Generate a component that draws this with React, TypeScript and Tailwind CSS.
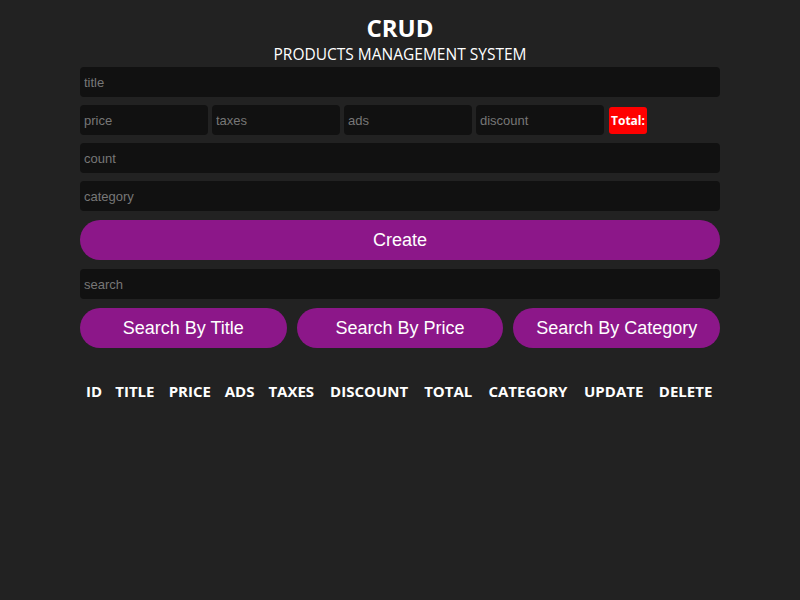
import React from "react";

const inputCls =
  "h-[30px] w-full rounded bg-[#111] px-1 text-[13px] text-white outline-none placeholder:text-[#777] font-['Liberation_Sans',Arial,sans-serif]";

const btnCls =
  "h-10 w-full rounded-full bg-[#8c1789] text-lg text-white font-['Liberation_Sans',Arial,sans-serif]";

const cols = ["id", "title", "price", "ads", "taxes", "discount", "total", "category", "update", "delete"];

export default function App() {
  return (
    <div className="min-h-screen bg-[#222] font-['Open_Sans',sans-serif] text-white">
      <div className="mx-auto w-[640px]">
        <div className="pt-[12px] text-center uppercase">
          <h2 className="text-2xl font-bold leading-8">CRUD</h2>
          <p className="mt-[2px] text-[15.5px] leading-[17px]">Products Management System</p>
        </div>
        <div className="flex flex-col">
          <input className={`${inputCls} my-1`} placeholder="title" />
          <div className="my-1 flex items-center gap-1">
            <input className={`${inputCls} !w-[128px]`} placeholder="price" />
            <input className={`${inputCls} !w-[128px]`} placeholder="taxes" />
            <input className={`${inputCls} !w-[128px]`} placeholder="ads" />
            <input className={`${inputCls} !w-[128px]`} placeholder="discount" />
            <small className="ml-px rounded-[3px] bg-[#f00] px-[2px] py-[5px] text-[12px] font-bold leading-[17px]">
              Total:
            </small>
          </div>
          <input className={`${inputCls} my-1`} placeholder="count" />
          <input className={`${inputCls} my-1`} placeholder="category" />
          <button className={`${btnCls} my-[5px]`}>Create</button>
        </div>
        <div className="mt-[4px] flex flex-col">
          <input className={`${inputCls}`} placeholder="search" />
          <div className="mt-[9px] flex gap-[10px]">
            <button className={btnCls}>Search By Title</button>
            <button className={btnCls}>Search By Price</button>
            <button className={btnCls}>Search By Category</button>
          </div>
        </div>
        <table className="mt-[27px] w-full">
          <thead>
            <tr>
              {cols.map((c) => (
                <th key={c} className="p-[5px] text-[15px] font-bold uppercase">
                  {c}
                </th>
              ))}
            </tr>
          </thead>
          <tbody></tbody>
        </table>
      </div>
    </div>
  );
}
